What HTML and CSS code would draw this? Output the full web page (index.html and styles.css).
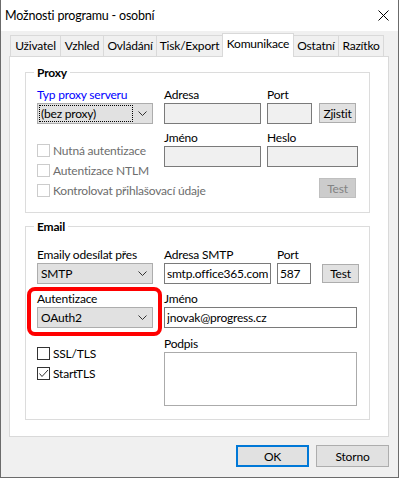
FILE: index.html
```
<!DOCTYPE html>
<html lang="cs">
<head>
    <meta charset="UTF-8">
    <meta name="viewport" content="width=device-width, initial-scale=1.0">
    <title>Možnosti programu - osobní</title>
    <link rel="stylesheet" href="styles.css">
</head>
<body>

    <div class="window">
        <div class="titlebar">
            <span class="title">Možnosti programu - osobní</span>
            <svg class="close" width="11" height="11" viewBox="0 0 11 11">
                <path d="M0.5 0.5L10.5 10.5M10.5 0.5L0.5 10.5" stroke="#000" stroke-width="1" fill="none"/>
            </svg>
        </div>

        <div class="dialog">
            <!-- Záložky -->
            <div class="tabs">
                <div class="tab tab-uzivatel">Uživatel</div>
                <div class="tab tab-vzhled">Vzhled</div>
                <div class="tab tab-ovladani">Ovládání</div>
                <div class="tab tab-tisk">Tisk/Export</div>
                <div class="tab tab-komunikace active">Komunikace</div>
                <div class="tab tab-ostatni">Ostatní</div>
                <div class="tab tab-razitko">Razítko</div>
            </div>

            <div class="panel">
                <!-- Proxy -->
                <fieldset class="group group-proxy">
                    <legend>Proxy</legend>
                    <div class="group-body">
                        <div class="col-left">
                            <div class="label link">Typ proxy serveru</div>
                            <div class="combo">
                                <span class="combo-value focused">(bez proxy)</span>
                                <svg class="chevron" width="9" height="5" viewBox="0 0 9 5"><polyline points="0.5,0.5 4.5,4.5 8.5,0.5" stroke="#333" fill="none"/></svg>
                            </div>
                            <div class="checks checks-proxy">
                                <div class="check disabled"><span class="box"></span>Nutná autentizace</div>
                                <div class="check disabled"><span class="box"></span>Autentizace NTLM</div>
                                <div class="check disabled"><span class="box"></span>Kontrolovat přihlašovací údaje</div>
                            </div>
                        </div>
                        <div class="col-right">
                            <div class="row">
                                <div class="field field-adresa">
                                    <div class="label">Adresa</div>
                                    <input type="text" disabled>
                                </div>
                                <div class="field field-port">
                                    <div class="label">Port</div>
                                    <input type="text" disabled>
                                </div>
                                <button class="btn btn-side">Zjistit</button>
                            </div>
                            <div class="row row-second">
                                <div class="field field-adresa">
                                    <div class="label">Jméno</div>
                                    <input type="text" disabled>
                                </div>
                                <div class="field field-heslo">
                                    <div class="label">Heslo</div>
                                    <input type="text" disabled>
                                </div>
                            </div>
                            <div class="row row-test">
                                <button class="btn btn-side" disabled>Test</button>
                            </div>
                        </div>
                    </div>
                </fieldset>

                <!-- Email -->
                <fieldset class="group group-email">
                    <legend>Email</legend>
                    <div class="group-body">
                        <div class="col-left">
                            <div class="label">Emaily odesílat přes</div>
                            <div class="combo">
                                <span class="combo-value">SMTP</span>
                                <svg class="chevron" width="9" height="5" viewBox="0 0 9 5"><polyline points="0.5,0.5 4.5,4.5 8.5,0.5" stroke="#333" fill="none"/></svg>
                            </div>
                            <div class="highlight">
                                <div class="label">Autentizace</div>
                                <div class="combo">
                                    <span class="combo-value">OAuth2</span>
                                    <svg class="chevron" width="9" height="5" viewBox="0 0 9 5"><polyline points="0.5,0.5 4.5,4.5 8.5,0.5" stroke="#333" fill="none"/></svg>
                                </div>
                            </div>
                            <div class="checks checks-email">
                                <div class="check"><span class="box"></span>SSL/TLS</div>
                                <div class="check"><span class="box">
                                    <svg width="11" height="11" viewBox="0 0 11 11"><polyline points="1.5,5.5 4,8.5 10,2" stroke="#333" fill="none"/></svg>
                                </span>StartTLS</div>
                            </div>
                        </div>
                        <div class="col-right">
                            <div class="row">
                                <div class="field field-smtp">
                                    <div class="label">Adresa SMTP</div>
                                    <input type="text" value="smtp.office365.com">
                                </div>
                                <div class="field field-smtp-port">
                                    <div class="label">Port</div>
                                    <input type="text" value="587">
                                </div>
                                <button class="btn btn-test">Test</button>
                            </div>
                            <div class="row row-jmeno">
                                <div class="field field-wide">
                                    <div class="label">Jméno</div>
                                    <input type="text" value="jnovak@progress.cz">
                                </div>
                            </div>
                            <div class="row row-podpis">
                                <div class="field field-wide">
                                    <div class="label">Podpis</div>
                                    <textarea></textarea>
                                </div>
                            </div>
                        </div>
                    </div>
                </fieldset>
            </div>

            <div class="actions">
                <button class="btn btn-lg btn-default">OK</button>
                <button class="btn btn-lg">Storno</button>
            </div>
        </div>
    </div>

</body>
</html>
```

FILE: styles.css
```
* {
    box-sizing: border-box;
}
body {
    margin: 0;
    font-family: Lato, "Noto Sans", sans-serif;
    font-size: 12px;
    letter-spacing: -0.2px;
    color: #000;
}
.window {
    width: 399px;
    height: 478px;
    background-color: #f0f0f0;
    border: 1px solid #6b6b6b;
    border-top: none;
}
.titlebar {
    height: 31px;
    background-color: #fff;
    display: flex;
    align-items: center;
    justify-content: space-between;
    padding: 0 9px 0 4px;
    font-size: 12.5px;
}
.dialog {
    padding: 2px 9px 0 8px;
}

/* Zalozky */
.tabs {
    display: flex;
    align-items: flex-end;
    height: 23px;
    padding-left: 1px;
    position: relative;
    z-index: 1;
}
.tab {
    height: 21px;
    line-height: 19px;
    border: 1px solid #d9d9d9;
    border-bottom: none;
    margin-right: -1px;
    text-align: center;
    background-color: #f0f0f0;
}
.tab.active {
    height: 24px;
    line-height: 20px;
    margin-bottom: -1px;
    background-color: #fff;
    position: relative;
}
.tab-uzivatel { width: 51px; }
.tab-vzhled { width: 44px; }
.tab-ovladani { width: 54px; }
.tab-tisk { width: 67px; }
.tab-komunikace { width: 72px; }
.tab-ostatni { width: 46px; }
.tab-razitko { width: 46px; }

.panel {
    height: 381px;
    background-color: #fff;
    border: 1px solid #d9d9d9;
    padding: 0 18px 0 15px;
}

/* Skupiny */
.group {
    margin: 0;
    border: 1px solid #dcdcdc;
    min-width: 0;
}
.group legend {
    font-weight: bold;
    line-height: 15px;
    padding: 0 3px;
    margin-left: -3px;
}
.group-proxy {
    margin-top: 8px;
    padding: 7px 11px 12px;
}
.group-email {
    margin-top: 6px;
    padding: 13px 11px 13px;
}
.group-body {
    display: flex;
}
.col-left {
    width: 116px;
    margin-right: 11px;
    flex-shrink: 0;
}
.col-right {
    flex: 1;
}
.label {
    line-height: 15px;
    height: 15px;
    white-space: nowrap;
}
.link {
    color: #0000ff;
}

/* Combo box */
.combo {
    display: flex;
    align-items: center;
    height: 21px;
    margin-top: 1px;
    padding: 1px;
    border: 1px solid #adadad;
    background-color: #e1e1e1;
}
.combo-value {
    width: 94px;
    height: 17px;
    line-height: 15px;
    padding-left: 1px;
    border: 1px dotted transparent;
}
.combo-value.focused {
    border-color: #000;
}
.chevron {
    margin-left: 5px;
}

/* Zaskrtavaci policka */
.check {
    display: flex;
    align-items: center;
    height: 20px;
    white-space: nowrap;
}
.check .box {
    width: 13px;
    height: 13px;
    border: 1px solid #333;
    background-color: #fff;
    margin-right: 3px;
    flex-shrink: 0;
}
.check .box svg {
    display: block;
}
.check.disabled {
    color: #6d6d6d;
}
.check.disabled .box {
    border-color: #cccccc;
}
.checks-proxy {
    margin-top: 16px;
}
.checks-email {
    margin-top: 7px;
}

/* Cervene zvyrazneni */
.highlight {
    margin: 3px -9px 0 -10px;
    padding: 0 5px 4px 6px;
    border: 4px solid #ff0000;
    border-radius: 8px;
}

/* Pole */
.row {
    display: flex;
    align-items: flex-end;
    gap: 6px;
}
.row-second {
    margin-top: 6px;
}
.row-test {
    margin-top: 11px;
    justify-content: flex-end;
    padding-right: 2px;
}
.row-jmeno {
    margin-top: 7px;
}
.row-podpis {
    margin-top: 8px;
}
input[type="text"], textarea {
    display: block;
    width: 100%;
    height: 21px;
    margin-top: 1px;
    padding: 0 2px;
    border: 1px solid #7a7a7a;
    background-color: #fff;
    font-family: inherit;
    font-size: inherit;
    letter-spacing: inherit;
    color: #000;
    outline: none;
}
input[type="text"]:disabled {
    background-color: #f0f0f0;
}
textarea {
    height: 54px;
    border-color: #ababab;
    resize: none;
}
.field-adresa { width: 97px; }
.field-port { width: 45px; }
.field-heslo { width: 91px; }
.field-smtp { width: 107px; }
.field-smtp-port { width: 34px; }
.field-wide { width: 193px; }

/* Tlacitka */
.btn {
    height: 20px;
    padding: 0;
    border: 1px solid #adadad;
    background-color: #e1e1e1;
    font-family: inherit;
    font-size: inherit;
    letter-spacing: inherit;
    color: #000;
}
.btn:disabled {
    background-color: #cccccc;
    border-color: #bfbfbf;
    color: #838383;
}
.btn-side {
    width: 37px;
    margin-left: 1px;
    margin-bottom: 1px;
}
.btn-test {
    width: 37px;
    height: 19px;
    margin-left: 5px;
    margin-bottom: 1px;
}
.actions {
    display: flex;
    justify-content: flex-end;
    gap: 7px;
    margin-top: 8px;
}
.btn-lg {
    width: 73px;
    height: 22px;
}
.btn-default {
    border: 2px solid #0078d7;
}
```
